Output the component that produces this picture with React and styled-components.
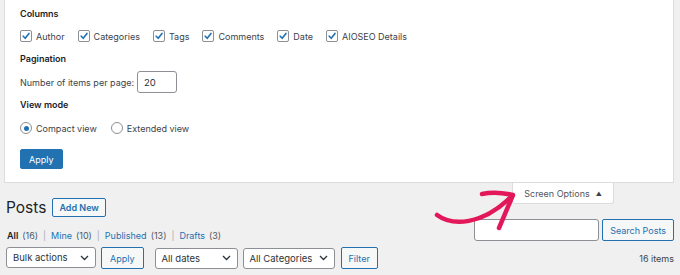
import React from 'react';
import styled, { createGlobalStyle } from 'styled-components';

const GlobalStyle = createGlobalStyle`
    html, body {
        margin: 0;
        padding: 0;
        background: #f0f0f1;
        overflow: hidden;
    }
    body {
        font-family: Inter, "Noto Sans", "Liberation Sans", sans-serif;
        font-size: 9px;
        color: #3c434a;
    }
`;

const Page = styled.div`
    position: relative;
    width: 680px;
    height: 275px;
    overflow: hidden;
`;

const Panel = styled.div`
    margin: 0 6px 0 4px;
    background: #fff;
    border: 1px solid #dcdcde;
    border-top: none;
    padding: 7px 15px 13px 15px;
`;

const Legend = styled.div`
    font-weight: 600;
    color: #1d2327;
    line-height: 14px;
    margin-bottom: ${p => p.$mb || 8}px;
`;

const Row = styled.div`
    display: flex;
    align-items: center;
    gap: ${p => p.$gap ?? 13}px;
    height: ${p => p.$h || 14}px;
    margin-bottom: ${p => p.$mb || 9}px;
`;

const Option = styled.label`
    display: flex;
    align-items: center;
    gap: 4px;
    color: #3c434a;
    white-space: nowrap;
`;

const Box = styled.span`
    width: 10px;
    height: 10px;
    border: 1px solid #8c8f94;
    border-radius: 2px;
    background: #fff;
    display: flex;
    align-items: center;
    justify-content: center;
`;

const Radio = styled.span`
    width: 10px;
    height: 10px;
    border: 1px solid #8c8f94;
    border-radius: 50%;
    background: #fff;
    display: flex;
    align-items: center;
    justify-content: center;
    &::after {
        content: '';
        width: 5px;
        height: 5px;
        border-radius: 50%;
        background: ${p => (p.$checked ? '#2271b1' : 'transparent')};
    }
`;

const NumberInput = styled.div`
    width: 32px;
    height: 20px;
    margin-left: 3px;
    border: 1px solid #8c8f94;
    border-radius: 3px;
    padding-left: 6px;
    display: flex;
    align-items: center;
    color: #2c3338;
    font-size: 9.5px;
`;

const Button = styled.button`
    font-family: inherit;
    font-size: 9px;
    height: ${p => p.$h || 21}px;
    padding: 0 ${p => p.$px || 7}px;
    border-radius: 2px;
    border: 1px solid #2271b1;
    background: ${p => (p.$primary ? '#2271b1' : '#f6f7f7')};
    color: ${p => (p.$primary ? '#fff' : '#2271b1')};
    font-weight: ${p => (p.$bold ? 600 : 400)};
    cursor: pointer;
    white-space: nowrap;
`;

const PrimaryRow = styled.div`
    display: flex;
`;

const Content = styled.div`
    padding: 0 6px 0 6px;
`;

const Tab = styled.div`
    float: right;
    margin-right: 60px;
    width: 100px;
    height: 20px;
    background: #fff;
    border: 1px solid #dcdcde;
    border-top: none;
    border-radius: 0 0 3px 3px;
    display: flex;
    align-items: center;
    justify-content: center;
    gap: 6px;
    color: #50575e;
`;

const Caret = styled.span`
    font-size: 6px;
    color: #3c434a;
`;

const Heading = styled.div`
    display: flex;
    align-items: center;
    gap: 6px;
    padding-top: 15px;
    height: 19px;
`;

const Title = styled.h1`
    margin: 0;
    font-size: 15.5px;
    font-weight: 400;
    color: #1d2327;
    line-height: 19px;
`;

const ListBar = styled.div`
    clear: both;
    display: flex;
    justify-content: space-between;
    align-items: flex-end;
    padding-top: 2px;
    height: 22px;
`;

const Views = styled.div`
    display: flex;
    align-items: center;
    gap: 4px;
    color: #50575e;
    padding: 0 0 0 1px;
`;

const ViewLink = styled.span`
    color: ${p => (p.$current ? '#1d2327' : '#2271b1')};
    font-weight: ${p => (p.$current ? 600 : 400)};
`;

const Sep = styled.span`
    color: #a7aaad;
    margin: 0 1px;
`;

const Search = styled.div`
    display: flex;
    gap: 3px;
`;

const TextInput = styled.div`
    width: 123px;
    height: 20px;
    background: #fff;
    border: 1px solid #8c8f94;
    border-radius: 3px;
`;

const TableNav = styled.div`
    display: flex;
    align-items: center;
    margin-top: 6px;
    height: 22px;
`;

const Group = styled.div`
    display: flex;
    gap: ${p => p.$gap || 5}px;
    margin-right: ${p => p.$mr || 0}px;
`;

const Select = styled.div`
    width: ${p => p.$w}px;
    height: 21px;
    box-sizing: border-box;
    background: #fff;
    border: 1px solid #8c8f94;
    border-radius: 3px;
    padding: 0 6px 0 6px;
    display: flex;
    align-items: center;
    justify-content: space-between;
    color: #2c3338;
    font-size: 9.5px;
`;

const Count = styled.div`
    margin-left: auto;
    color: #3c434a;
`;

const Arrow = styled.svg`
    position: absolute;
    left: 430px;
    top: 180px;
    pointer-events: none;
`;

const Check = () => (
    <svg width="10" height="10" viewBox="0 0 10 10">
        <path d="M2.2 5.2 L4.2 7.3 L8 2.4" fill="none" stroke="#2271b1" strokeWidth="1.6" strokeLinecap="round" strokeLinejoin="round" />
    </svg>
);

const Chevron = () => (
    <svg width="9" height="6" viewBox="0 0 9 6">
        <path d="M1 1 L4.5 4.5 L8 1" fill="none" stroke="#2c3338" strokeWidth="1.3" />
    </svg>
);

const columns = ['Author', 'Categories', 'Tags', 'Comments', 'Date', 'AIOSEO Details'];

const App = () => (
    <Page>
        <GlobalStyle />
        <Panel>
            <Legend>Columns</Legend>
            <Row $mb={9}>
                {columns.map(c => (
                    <Option key={c}>
                        <Box><Check /></Box>
                        {c}
                    </Option>
                ))}
            </Row>
            <Legend $mb={5}>Pagination</Legend>
            <Row $h={22} $mb={5} $gap={0}>
                <span>Number of items per page:</span>
                <NumberInput>20</NumberInput>
            </Row>
            <Legend $mb={9}>View mode</Legend>
            <Row $mb={14} $gap={14}>
                <Option><Radio $checked />Compact view</Option>
                <Option><Radio />Extended view</Option>
            </Row>
            <PrimaryRow>
                <Button $primary $px={8} $h={20}>Apply</Button>
            </PrimaryRow>
        </Panel>
        <Content>
            <Tab>Screen Options <Caret>▲</Caret></Tab>
            <Heading>
                <Title>Posts</Title>
                <Button $bold $h={19} $px={6}>Add New</Button>
            </Heading>
            <ListBar>
                <Views>
                    <ViewLink $current>All</ViewLink> (16)<Sep>|</Sep>
                    <ViewLink>Mine</ViewLink> (10)<Sep>|</Sep>
                    <ViewLink>Published</ViewLink> (13)<Sep>|</Sep>
                    <ViewLink>Drafts</ViewLink> (3)
                </Views>
                <Search>
                    <TextInput />
                    <Button $h={22} $px={7}>Search Posts</Button>
                </Search>
            </ListBar>
            <TableNav>
                <Group $mr={11}>
                    <Select $w={90}>Bulk actions<Chevron /></Select>
                    <Button $h={22} $px={8}>Apply</Button>
                </Group>
                <Group $mr={6}>
                    <Select $w={83}>All dates<Chevron /></Select>
                    <Select $w={92}>All Categories<Chevron /></Select>
                </Group>
                <Button $h={22} $px={7}>Filter</Button>
                <Count>16 items</Count>
            </TableNav>
        </Content>
        <Arrow width="90" height="55" viewBox="0 0 90 55">
            <g fill="none" stroke="#e3185b" strokeWidth="4.5" strokeLinecap="round" strokeLinejoin="round">
                <path d="M7 35 C 22 46, 52 46, 82 16" />
                <path d="M52 14 C 62 12, 74 13, 83 15 L 69 48" />
            </g>
        </Arrow>
    </Page>
);

export default App;
